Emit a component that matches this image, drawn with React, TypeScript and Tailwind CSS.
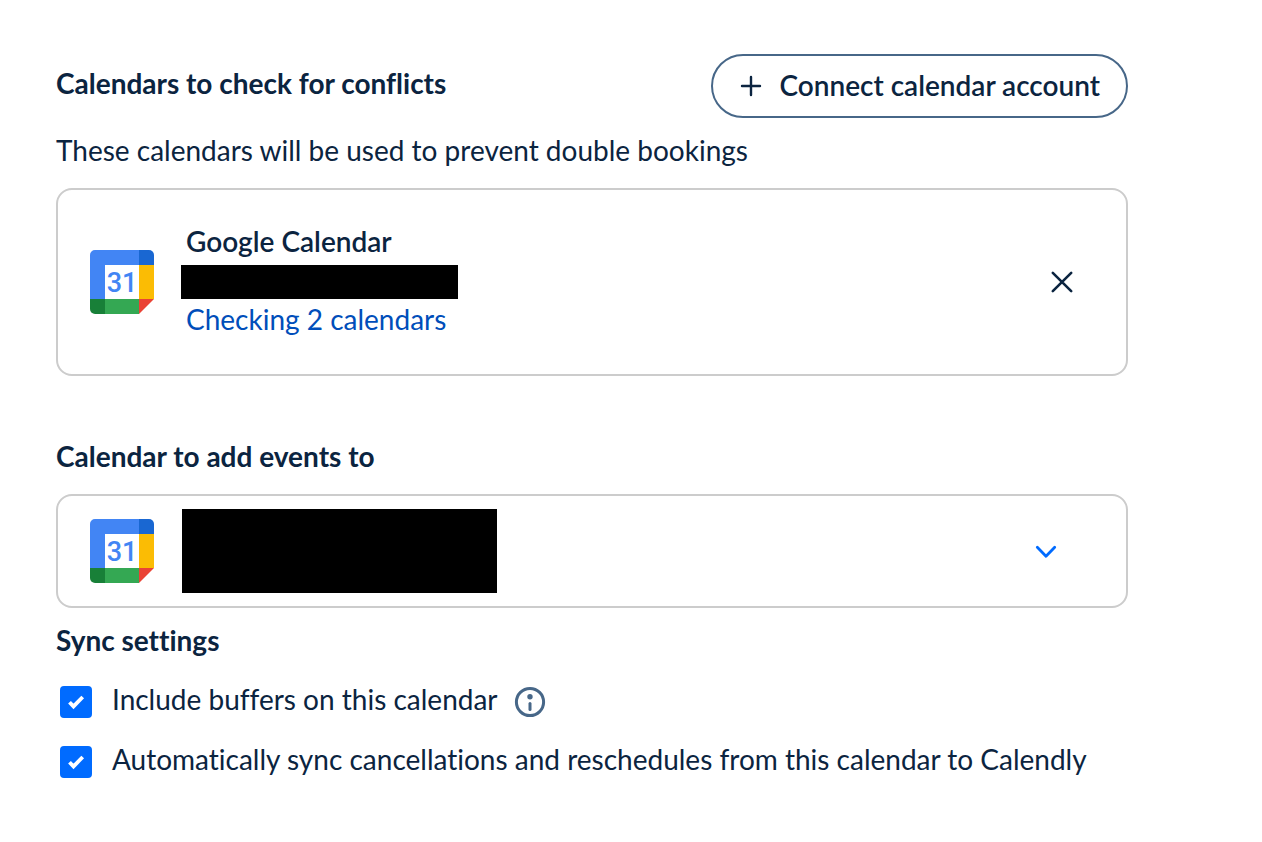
import { useState } from 'react'
import type { ReactNode } from 'react'

function GoogleCalendarLogo() {
  return (
    <svg viewBox="0 0 64 64" className="h-16 w-16 shrink-0" role="img" aria-label="Google Calendar">
      <path d="M15 15h34v34H15z" fill="#fff" />
      <path d="M5 0h44v15H15v34H0V5a5 5 0 0 1 5-5z" fill="#4285f4" />
      <path d="M49 0h10a5 5 0 0 1 5 5v10H49z" fill="#1967d2" />
      <path d="M49 15h15v34H49z" fill="#fbbc04" />
      <path d="M15 49h34v15H15z" fill="#34a853" />
      <path d="M0 49h15v15H5a5 5 0 0 1-5-5z" fill="#188038" />
      <path d="M49 49h15L49 64z" fill="#ea4335" />
      <text
        x="32"
        y="42"
        textAnchor="middle"
        fill="#4285f4"
        fontSize="27"
        fontWeight="500"
        fontFamily="Roboto, sans-serif"
      >
        31
      </text>
    </svg>
  )
}

interface CheckOptionProps {
  id: string
  label: string
  children?: ReactNode
}

function CheckOption({ id, label, children }: CheckOptionProps) {
  const [checked, setChecked] = useState(true)

  return (
    <div className="flex items-center">
      <span className="relative h-8 w-8 shrink-0">
        <input
          id={id}
          type="checkbox"
          checked={checked}
          onChange={(e) => setChecked(e.target.checked)}
          className="block h-8 w-8 appearance-none rounded border-2 border-[#006bff] checked:bg-[#006bff]"
        />
        {checked && (
          <svg viewBox="0 0 32 32" className="pointer-events-none absolute inset-0 h-8 w-8" aria-hidden="true">
            <path d="M9.5 16.2l4 4.2 9.2-9.4" fill="none" stroke="#fff" strokeWidth="3.8" />
          </svg>
        )}
      </span>
      <label htmlFor={id} className="ml-5 pb-1.5 leading-[26px]">
        {label}
      </label>
      {children}
    </div>
  )
}

export default function App() {
  const [connected, setConnected] = useState(true)

  return (
    <main className="min-h-screen bg-white pt-[54px] pr-[134px] pb-16 pl-14 font-['Lato',sans-serif] text-[28px] leading-10 text-[#0b2440] [font-variant-ligatures:none]">
      <section>
        <div className="flex items-center justify-between">
          <h2 className="pb-1.5 font-bold">Calendars to check for conflicts</h2>
          <button
            type="button"
            className="flex h-16 items-center gap-4 rounded-full border-2 border-[#476788] pr-[26px] pl-[26px] font-semibold"
          >
            <svg viewBox="0 0 24 24" className="h-6 w-6" aria-hidden="true">
              <path d="M12 3v18M3 12h18" fill="none" stroke="currentColor" strokeWidth="2.4" strokeLinecap="round" />
            </svg>
            <span className="pb-0.5">Connect calendar account</span>
          </button>
        </div>
        <p className="mt-3">These calendars will be used to prevent double bookings</p>

        {connected && (
          <div className="mt-[18px] flex h-[188px] items-center rounded-2xl border-2 border-[#cccccc] pr-[50px] pl-8">
            <GoogleCalendarLogo />
            <div className="ml-[27px] flex-1 pb-1">
              <h3 className="pl-[5px] font-semibold">Google Calendar</h3>
              <div className="mt-1 h-[34px] w-[277px] bg-black" />
              <a href="#calendars" className="ml-[5px] block w-fit text-[#004eba]">
                Checking 2 calendars
              </a>
            </div>
            <button type="button" aria-label="Remove calendar" onClick={() => setConnected(false)}>
              <svg viewBox="0 0 28 28" className="h-7 w-7" aria-hidden="true">
                <path d="M4.8 4.8l18.4 18.4M23.2 4.8L4.8 23.2" fill="none" stroke="currentColor" strokeWidth="2.6" strokeLinecap="round" />
              </svg>
            </button>
          </div>
        )}
      </section>

      <section className="mt-[60px]">
        <h2 className="font-bold">
          <label htmlFor="target-calendar">Calendar to add events to</label>
        </h2>
        <div className="relative mt-[18px] flex h-[114px] items-center rounded-2xl border-2 border-[#cccccc] pr-[66px] pl-8">
          <GoogleCalendarLogo />
          <div className="ml-7 h-[84px] w-[315px] bg-black" />
          <svg viewBox="0 0 28 28" className="ml-auto h-7 w-7" aria-hidden="true">
            <path d="M5.3 10.3L14 19.2l8.7-8.9" fill="none" stroke="#006bff" strokeWidth="2.8" strokeLinecap="round" strokeLinejoin="round" />
          </svg>
          <select id="target-calendar" className="absolute inset-0 h-full w-full cursor-pointer appearance-none rounded-2xl bg-transparent">
            <option value="google" />
          </select>
        </div>
      </section>

      <section className="mt-3">
        <h2 className="font-bold">Sync settings</h2>
        <div className="mt-[26px] flex flex-col gap-7 pl-1">
          <CheckOption id="buffers" label="Include buffers on this calendar">
            <button type="button" aria-label="About buffers" className="ml-4">
              <svg viewBox="0 0 32 32" className="h-8 w-8" aria-hidden="true">
                <circle cx="16" cy="16" r="13.6" fill="none" stroke="#476788" strokeWidth="3" />
                <circle cx="16" cy="10.8" r="2.7" fill="#476788" />
                <path d="M16 17.5v6" fill="none" stroke="#476788" strokeWidth="3" strokeLinecap="round" />
              </svg>
            </button>
          </CheckOption>
          <CheckOption
            id="auto-sync"
            label="Automatically sync cancellations and reschedules from this calendar to Calendly"
          />
        </div>
      </section>
    </main>
  )
}
